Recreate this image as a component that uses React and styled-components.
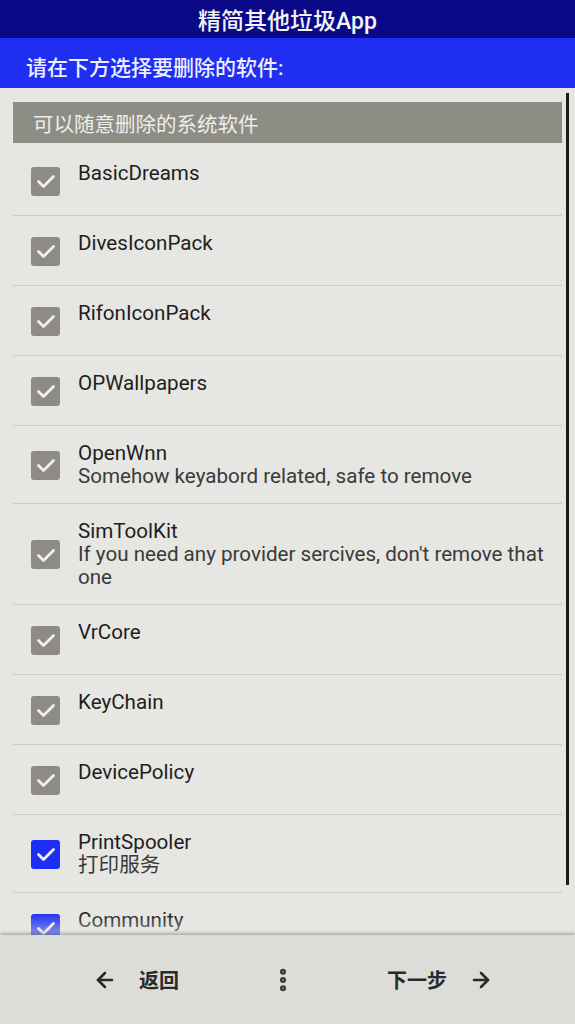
import React from 'react';
import styled, { createGlobalStyle } from 'styled-components';
import { ArrowLeft, ArrowRight, EllipsisVertical } from 'lucide-react';

const apps = [
  { name: 'BasicDreams' },
  { name: 'DivesIconPack' },
  { name: 'RifonIconPack' },
  { name: 'OPWallpapers' },
  { name: 'OpenWnn', desc: 'Somehow keyabord related, safe to remove' },
  { name: 'SimToolKit', desc: "If you need any provider sercives, don't remove that one" },
  { name: 'VrCore' },
  { name: 'KeyChain' },
  { name: 'DevicePolicy' },
  { name: 'PrintSpooler', desc: '打印服务', blue: true },
  { name: 'Community', blue: true },
];

const GlobalStyle = createGlobalStyle`
  html, body {
    margin: 0;
    padding: 0;
    background: #e6e6e2;
  }
  body {
    font-family: Roboto, "Noto Sans CJK SC", sans-serif;
  }
`;

const App = () => {
  return (
    <Screen>
      <GlobalStyle />
      <TitleBar>精简其他垃圾App</TitleBar>
      <SubBar>请在下方选择要删除的软件:</SubBar>
      <ListArea>
        <List>
          <SectionHeader>可以随意删除的系统软件</SectionHeader>
          {apps.map(app => (
            <Row key={app.name}>
              <Box $blue={app.blue}>
                <svg width="24" height="24" viewBox="0 0 24 24" fill="none">
                  <path d="M4.5 12.5l5 5L19.5 7.5" stroke="#f0f0f0" strokeWidth="2.8" strokeLinecap="round" strokeLinejoin="round" />
                </svg>
              </Box>
              <TextCol>
                <Name>{app.name}</Name>
                {app.desc && <Desc>{app.desc}</Desc>}
              </TextCol>
            </Row>
          ))}
        </List>
        <ScrollThumb />
        <Fade />
      </ListArea>
      <BottomBar>
        <NavButton>
          <ArrowLeft size={24} strokeWidth={2.6} />
          <span>返回</span>
        </NavButton>
        <EllipsisVertical size={28} strokeWidth={3.2} color="#3a3a3a" />
        <NavButton>
          <span>下一步</span>
          <ArrowRight size={24} strokeWidth={2.6} />
        </NavButton>
      </BottomBar>
    </Screen>
  );
};
export default App;

const Screen = styled.div`
  width: 575px;
  height: 1024px;
  display: flex;
  flex-direction: column;
  overflow: hidden;
  background: #e6e6e2;
`;

const TitleBar = styled.div`
  height: 38px;
  flex-shrink: 0;
  background: #0a0a88;
  color: #f4f4f4;
  font-size: 23px;
  font-weight: 500;
  display: flex;
  align-items: center;
  justify-content: center;
`;

const SubBar = styled.div`
  height: 50px;
  flex-shrink: 0;
  background: #1f2ef0;
  color: #eef0ff;
  font-size: 21px;
  font-weight: 500;
  display: flex;
  align-items: center;
  padding-left: 26px;
  padding-top: 6px;
  box-sizing: border-box;
`;

const ListArea = styled.div`
  flex: 1;
  position: relative;
  overflow: hidden;
`;

const List = styled.div`
  padding: 14px 13px 0;
`;

const SectionHeader = styled.div`
  height: 41px;
  margin-bottom: 3px;
  background: #8e8d85;
  color: #ededea;
  font-size: 20.5px;
  display: flex;
  align-items: center;
  padding-left: 20px;
`;

const Row = styled.div`
  min-height: 70px;
  box-sizing: border-box;
  display: flex;
  align-items: flex-start;
  padding: 16px 0 15px;
  border-bottom: 1px solid #cbcbc7;
`;

const Box = styled.div`
  width: 29px;
  height: 29px;
  border-radius: 3px;
  flex-shrink: 0;
  align-self: center;
  margin: 0 18px;
  background: ${p => (p.$blue ? '#1d2ef2' : '#8e8a86')};
  display: flex;
  align-items: center;
  justify-content: center;
`;

const TextCol = styled.div`
  display: flex;
  flex-direction: column;
  padding-right: 6px;
`;

const Name = styled.div`
  font-size: 20.6px;
  line-height: 23px;
  color: #1e1e1e;
`;

const Desc = styled.div`
  font-size: 20.6px;
  line-height: 23px;
  color: #3a3a3a;
`;

const ScrollThumb = styled.div`
  position: absolute;
  right: 6px;
  top: 5px;
  width: 3px;
  height: 792px;
  background: #1c1c1c;
`;

const Fade = styled.div`
  position: absolute;
  left: 0;
  right: 0;
  bottom: 0;
  height: 22px;
  background: linear-gradient(to bottom, rgba(230, 230, 226, 0), rgba(230, 230, 226, 0.55));
`;

const BottomBar = styled.div`
  height: 89px;
  flex-shrink: 0;
  background: #dcdcd8;
  box-shadow: 0 -2px 3px rgba(0, 0, 0, 0.25);
  display: flex;
  align-items: center;
  justify-content: space-between;
  padding: 0 82px 0 93px;
  position: relative;
`;

const NavButton = styled.div`
  display: flex;
  align-items: center;
  gap: 22px;
  color: #2a2a2a;
  font-size: 20px;
  font-weight: 700;
`;
